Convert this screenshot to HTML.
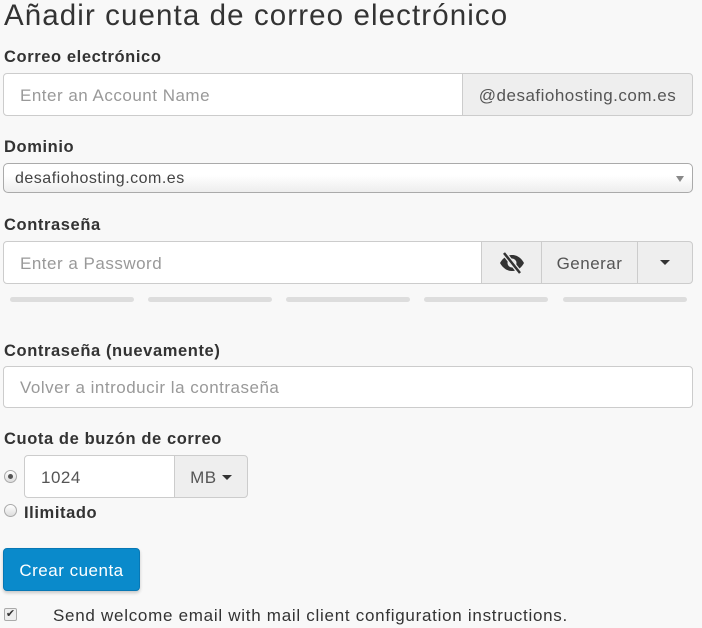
<!DOCTYPE html>
<html><head><meta charset="utf-8"><style>
*{box-sizing:border-box;margin:0;padding:0}
body{width:702px;height:628px;background:#f8f8f8;font-family:"Liberation Sans",sans-serif;color:#333;position:relative;overflow:hidden;letter-spacing:0.5px}
.a{position:absolute}
h1{position:absolute;left:4px;top:-1px;font-weight:normal;font-size:29.5px;letter-spacing:1.1px;color:#333;white-space:nowrap}
.lbl{position:absolute;left:4px;font-weight:bold;font-size:16.5px;color:#333;letter-spacing:0.6px}
.box{position:absolute;background:#fff;border:1px solid #ccc;font-size:17px;color:#999;padding-left:16px;display:flex;align-items:center;padding-top:2px}
.add{position:absolute;background:#eee;border:1px solid #ccc;font-size:17px;color:#555;display:flex;align-items:center;justify-content:center;padding-top:2px}
.bar{position:absolute;top:297px;height:5px;background:#ddd;border-radius:3px}
.radio{position:absolute;width:13px;height:13px;border-radius:50%;border:1px solid #aaa;background:linear-gradient(#fff,#ddd)}
</style></head><body>
<h1>Añadir cuenta de correo electrónico</h1>
<div class="lbl" style="top:48px">Correo electrónico</div>
<div class="box" style="left:3px;top:73px;width:460px;height:43px;border-radius:4px 0 0 4px">Enter an Account Name</div>
<div class="add" style="left:462px;top:73px;width:231px;height:43px;border-radius:0 4px 4px 0">@desafiohosting.com.es</div>
<div class="lbl" style="top:138px">Dominio</div>
<div class="a" style="left:3px;top:163px;width:690px;height:30px;border:1px solid #aaa;border-radius:5px;background:linear-gradient(#fff 0%,#fff 40%,#eee 100%);font-size:16px;color:#444;padding-left:11px;line-height:30px">desafiohosting.com.es<span class="a" style="right:8px;top:12px;border-left:4px solid transparent;border-right:4px solid transparent;border-top:6px solid #888"></span></div>
<div class="lbl" style="top:216px">Contraseña</div>
<div class="box" style="left:3px;top:241px;width:479px;height:43px;border-radius:4px 0 0 4px">Enter a Password</div>
<div class="add" style="left:481px;top:241px;width:61px;height:43px;padding-top:0">
<svg width="26" height="22" viewBox="0 0 26 22"><path d="M1 11 C5 4 10 3 13 3 C16 3 21 4 25 11 C21 18 16 19 13 19 C10 19 5 18 1 11Z" fill="#333"/><circle cx="13" cy="11" r="4.5" fill="#eee"/><circle cx="13" cy="11" r="2.5" fill="#333"/><path d="M5 1 L21 21" stroke="#eee" stroke-width="5"/><path d="M5 1 L21 21" stroke="#333" stroke-width="2.5"/></svg></div>
<div class="add" style="left:541px;top:241px;width:97px;height:43px">Generar</div>
<div class="add" style="left:637px;top:241px;width:56px;height:43px;border-radius:0 4px 4px 0;padding-top:0"><span style="border-left:5px solid transparent;border-right:5px solid transparent;border-top:5px solid #333"></span></div>
<div class="bar" style="left:10px;width:124px"></div>
<div class="bar" style="left:148px;width:124px"></div>
<div class="bar" style="left:286px;width:124px"></div>
<div class="bar" style="left:424px;width:124px"></div>
<div class="bar" style="left:563px;width:124px"></div>
<div class="lbl" style="top:342px">Contraseña (nuevamente)</div>
<div class="box" style="left:3px;top:366px;width:690px;height:42px;border-radius:4px">Volver a introducir la contraseña</div>
<div class="lbl" style="top:430px">Cuota de buzón de correo</div>
<div class="radio" style="left:4px;top:470px"><span class="a" style="left:3px;top:3px;width:5px;height:5px;border-radius:50%;background:#555"></span></div>
<div class="box" style="left:24px;top:455px;width:151px;height:43px;border-radius:4px 0 0 4px;color:#555">1024</div>
<div class="add" style="left:174px;top:455px;width:74px;height:43px;border-radius:0 4px 4px 0">MB&nbsp;<span style="border-left:5px solid transparent;border-right:5px solid transparent;border-top:5px solid #333"></span></div>
<div class="radio" style="left:4px;top:504px"></div>
<div class="lbl" style="left:24px;top:504px">Ilimitado</div>
<div class="a" style="left:3px;top:548px;width:137px;height:43px;background:#0a8acb;border:1px solid #0778b5;border-radius:4px;color:#fff;font-size:17px;display:flex;align-items:center;justify-content:center;padding-top:2px;box-shadow:0 2px 3px rgba(0,0,0,.2)">Crear cuenta</div>
<div class="a" style="left:4px;top:608px;width:13px;height:13px;border:1px solid #aaa;border-radius:2px;background:#eee;font-size:11px;line-height:11px;text-align:center;color:#333;letter-spacing:0">✔</div>
<div class="a" style="left:53px;top:606px;font-size:17px;color:#333;white-space:nowrap;letter-spacing:0.72px">Send welcome email with mail client configuration instructions.</div>
</body></html>
